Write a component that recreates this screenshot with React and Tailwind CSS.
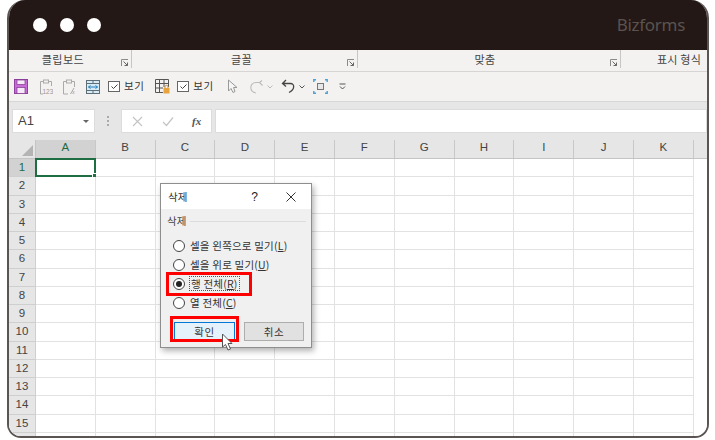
const columns = ['A', 'B', 'C', 'D', 'E', 'F', 'G', 'H', 'I', 'J', 'K'];
const rows = Array.from({ length: 16 }, (_, i) => i + 1);

function Launcher({ className = '' }) {
  return (
    <svg width="8" height="8" viewBox="0 0 8 8" fill="none" className={className}>
      <path d="M0.5 7V0.5H7" stroke="#8a8a8a" />
      <path d="M2.5 2.5L6.5 6.5M6.5 3.5V6.5H3.5" stroke="#666" />
    </svg>
  );
}

function RibbonGroup({ label, className }) {
  return (
    <div className={`relative flex justify-center items-center h-[18px] border-r border-[#c8c6c4] ${className}`}>
      <span className="text-[11px] text-[#444] tracking-[0.5px]">{label}</span>
      <Launcher className="absolute right-[2px] bottom-[1px]" />
    </div>
  );
}

function CheckView() {
  return (
    <div className="flex items-center gap-[4px]">
      <span className="flex items-center justify-center w-[12px] h-[11px] border border-[#666] bg-white">
        <svg width="9" height="9" viewBox="0 0 9 9" fill="none">
          <path d="M1.5 4.5L3.5 6.5L7.5 2.5" stroke="#444" strokeWidth="1" />
        </svg>
      </span>
      <span className="text-[10.5px] text-[#333] leading-none tracking-[0.5px]">보기</span>
    </div>
  );
}

function Toolbar() {
  return (
    <div className="flex items-center h-[30px] bg-[#f3f2f1] border-t border-[#d6d5d4] pl-[5px] shrink-0">
      <svg width="14" height="15" viewBox="0 0 14 15" fill="none">
        <rect x="0.5" y="0.5" width="13" height="14" fill="#c86ad8" stroke="#8f3fa0" />
        <rect x="3" y="1" width="8" height="4.5" fill="#f6e8f8" stroke="#7c3a88" strokeWidth="0.7" />
        <rect x="3" y="8.5" width="8" height="6" fill="#f6e8f8" stroke="#7c3a88" strokeWidth="0.7" />
      </svg>
      <svg width="13" height="16" viewBox="0 0 13 16" fill="none" className="ml-[12px]">
        <path d="M3 2.5H0.5V15H3M9 2.5H11.5V7" stroke="#aaa" />
        <rect x="3.5" y="1" width="5" height="3" stroke="#aaa" />
        <text x="2.5" y="15" fontSize="6.5" fill="#999" fontFamily="Liberation Sans">123</text>
      </svg>
      <svg width="14" height="16" viewBox="0 0 14 16" fill="none" className="ml-[10px]">
        <path d="M3 2.5H0.5V15H5M9 2.5H11.5V8" stroke="#aaa" />
        <rect x="3.5" y="1" width="5" height="3" stroke="#aaa" />
        <path d="M11 9L7.5 15" stroke="#aaa" />
        <text x="9" y="15" fontSize="6" fontStyle="italic" fill="#999" fontFamily="Liberation Serif">x</text>
      </svg>
      <svg width="14" height="14" viewBox="0 0 14 14" fill="none" className="ml-[9px]">
        <rect x="0.5" y="0.5" width="13" height="13" fill="#d6ebf5" stroke="#5f6f76" />
        <path d="M0.5 3.5H13.5M0.5 10.5H13.5M7 0.5V3.5M7 10.5V13.5" stroke="#5f6f76" />
        <path d="M2.5 7H11.5M2.5 7L4.5 5.5M2.5 7L4.5 8.5M11.5 7L9.5 5.5M11.5 7L9.5 8.5" stroke="#1f7fc0" />
      </svg>
      <div className="ml-[8px]"><CheckView /></div>
      <svg width="15" height="15" viewBox="0 0 15 15" fill="none" className="ml-[11px]">
        <path d="M0.5 0.5H13.5V8M0.5 0.5V13.5H8M0.5 4.5H13.5M4.5 0.5V13.5M9 0.5V8M0.5 9H8" stroke="#555" />
        <rect x="8.5" y="9" width="6" height="5.5" fill="#e8a33d" />
        <path d="M10 9V7.5C10 6 13 6 13 7.5V9" stroke="#c98a2a" />
      </svg>
      <div className="ml-[7px]"><CheckView /></div>
      <svg width="12" height="15" viewBox="0 0 12 15" fill="none" className="ml-[13px]">
        <path d="M1.5 1V12L4 9.5L6 13.5L8 12.5L6.5 8.5H10Z" fill="#f5f5f5" stroke="#999" />
      </svg>
      <svg width="14" height="14" viewBox="0 0 14 14" fill="none" className="ml-[11px]">
        <path d="M9.5 2.5H6C2.5 2.5 0.8 5 0.8 7.5C0.8 10.5 3.5 12.5 6 13M12.5 5.5L9.5 2.5L12 0.5" stroke="#bbb" strokeWidth="1.1" />
      </svg>
      <svg width="6" height="4" viewBox="0 0 6 4" fill="none" className="ml-[3px]">
        <path d="M0.5 0.5L3 3L5.5 0.5" stroke="#bbb" />
      </svg>
      <svg width="15" height="15" viewBox="0 0 15 15" fill="none" className="ml-[8px]">
        <path d="M5 1L1.5 4.5L5 7.5M1.5 4.5H9.5C13.5 4.5 14.5 10 8 13.5" stroke="#444" strokeWidth="1.3" />
      </svg>
      <svg width="6" height="4" viewBox="0 0 6 4" fill="none" className="ml-[3px]">
        <path d="M0.5 0.5L3 3L5.5 0.5" stroke="#555" />
      </svg>
      <svg width="15" height="15" viewBox="0 0 15 15" fill="none" className="ml-[8px]">
        <rect x="4.5" y="4.5" width="6" height="6" fill="#e8e8e8" stroke="#777" />
        <path d="M0.8 3V0.8H3M12 0.8H14.2V3M0.8 12V14.2H3M14.2 12V14.2H12" stroke="#4a9fd6" strokeWidth="1.4" />
      </svg>
      <svg width="7" height="7" viewBox="0 0 7 7" fill="none" className="ml-[11px]">
        <path d="M0.5 1H6.5M1 3.5L3.5 6L6 3.5" stroke="#555" />
      </svg>
    </div>
  );
}

function FormulaBar() {
  return (
    <div className="flex items-stretch h-[39px] bg-[#e6e6e6] pt-[7px] pb-[7px] shrink-0 border-t border-[#d6d6d6]">
      <div className="flex items-center justify-between w-[83px] ml-[3px] bg-white border border-[#dcdcdc] pl-[5px] pr-[5px]">
        <span className="text-[13px] text-[#444] font-['Liberation_Sans',sans-serif]">A1</span>
        <span className="w-0 h-0 border-x-[3px] border-x-transparent border-t-[3px] border-t-[#666]" />
      </div>
      <div className="flex flex-col justify-center gap-[2px] w-[26px] items-center">
        <span className="w-[2px] h-[2px] bg-[#aaa]" />
        <span className="w-[2px] h-[2px] bg-[#aaa]" />
        <span className="w-[2px] h-[2px] bg-[#aaa]" />
      </div>
      <div className="flex items-center w-[91px] bg-white border border-[#dcdcdc]">
        <svg width="11" height="11" viewBox="0 0 11 11" fill="none" className="ml-[10px]">
          <path d="M1 1L10 10M10 1L1 10" stroke="#c4c4c4" strokeWidth="1.2" />
        </svg>
        <svg width="12" height="11" viewBox="0 0 12 11" fill="none" className="ml-[19px]">
          <path d="M1 6L4.5 9.5L11 1.5" stroke="#c4c4c4" strokeWidth="1.2" />
        </svg>
        <span className="ml-[18px] text-[11px] italic font-bold text-[#555] font-['Liberation_Serif',serif]">fx</span>
      </div>
      <div className="flex-1 ml-[3px] bg-white border border-[#dcdcdc]" />
    </div>
  );
}

function Sheet() {
  return (
    <div className="flex-1 min-h-0 overflow-hidden bg-white font-['Liberation_Sans',sans-serif]">
      <div className="flex h-[19px] bg-[#e6e6e6] border-b border-[#c4c4c4]">
        <div className="relative w-[27px] shrink-0 border-r border-[#c4c4c4]">
          <span className="absolute right-[2px] bottom-[2px] w-0 h-0 border-l-[11px] border-l-transparent border-b-[11px] border-b-[#b4b4b4]" />
        </div>
        {columns.map((c, i) => (
          <div
            key={c}
            className={`flex items-center justify-center w-[59.8px] shrink-0 pb-[2px] text-[11.5px] border-r border-[#c8c8c8] ${i === 0 ? 'bg-[#d2d2d2] text-[#1f6b45]' : 'text-[#444]'}`}
          >
            {c}
          </div>
        ))}
      </div>
      {rows.map(r => (
        <div key={r} className="flex h-[18.25px]">
          <div className={`flex items-center justify-center w-[27px] shrink-0 text-[11.5px] border-r border-b border-[#cfcfcf] ${r === 1 ? 'bg-[#d2d2d2] text-[#1f6b45]' : 'bg-[#e6e6e6] text-[#444]'}`}>
            {r < 16 ? r : ''}
          </div>
          {columns.map((c, i) => (
            <div key={c} className="relative w-[59.8px] shrink-0 border-r border-b border-[#e2e2e2]">
              {r === 1 && i === 0 && (
                <span className="absolute -left-[1px] -top-[1px] right-[-1px] bottom-[-1px] border-2 border-[#1f6e43]">
                  <span className="absolute -right-[3px] -bottom-[3px] w-[5px] h-[5px] bg-[#1f6e43] border border-white" />
                </span>
              )}
            </div>
          ))}
        </div>
      ))}
    </div>
  );
}

function Radio({ label, hotkey, checked, focused }) {
  return (
    <div className="flex items-center h-[19px]">
      <span className="flex items-center justify-center w-[12px] h-[12px] rounded-full border border-[#444] bg-white shrink-0">
        {checked && <span className="w-[6px] h-[6px] rounded-full bg-[#222]" />}
      </span>
      <span className={`ml-[4px] px-[1px] text-[10.5px] text-[#333] tracking-[0.2px] whitespace-nowrap ${focused ? 'border border-dotted border-[#555] leading-[13px]' : ''}`}>
        {label}(<span className="underline">{hotkey}</span>)
      </span>
    </div>
  );
}

function DeleteDialog() {
  return (
    <div className="absolute left-[151px] top-[183px] w-[152px] h-[165px] flex flex-col bg-[#f0f0f0] border border-[#8e8e8e] shadow-[2px_3px_6px_rgba(0,0,0,0.3)]">
      <div className="flex items-center h-[25px] bg-white pl-[7px] shrink-0">
        <span className="text-[10.5px] text-[#333]">삭제</span>
        <span className="ml-[64px] text-[12px] text-[#222] font-['Liberation_Sans',sans-serif]">?</span>
        <svg width="10" height="10" viewBox="0 0 10 10" fill="none" className="ml-[28px]">
          <path d="M0.5 0.5L9.5 9.5M9.5 0.5L0.5 9.5" stroke="#333" />
        </svg>
      </div>
      <div className="flex items-center gap-[4px] pl-[6px] pr-[5px] mt-[5px] h-[14px]">
        <span className="text-[10.5px] text-[#444]">삭제</span>
        <span className="flex-1 h-px bg-[#dcdcdc]" />
      </div>
      <div className="flex flex-col pl-[12px] mt-[8px]">
        <Radio label="셀을 왼쪽으로 밀기" hotkey="L" />
        <Radio label="셀을 위로 밀기" hotkey="U" />
        <Radio label="행 전체" hotkey="R" checked focused />
        <Radio label="열 전체" hotkey="C" />
      </div>
      <div className="flex gap-[9px] pl-[13px] mt-[10px]">
        <div className="flex items-center justify-center w-[61px] h-[19px] bg-[#e5f1fb] border border-[#0078d7] text-[10.5px] text-[#333] tracking-[0.5px]">확인</div>
        <div className="flex items-center justify-center w-[60px] h-[19px] bg-[#e1e1e1] border border-[#adadad] text-[10.5px] text-[#333] tracking-[0.5px]">취소</div>
      </div>
    </div>
  );
}

export default function App() {
  return (
    <div className="w-[715px] h-[440px] bg-white font-['Noto_Sans_CJK_KR','Noto_Sans',sans-serif] overflow-hidden">
      <div className="relative flex flex-col w-[702px] h-[438px] ml-[7px] rounded-t-[18px] rounded-b-[14px] border-x-2 border-b-2 border-[#5a5452] overflow-hidden bg-white">
        <div className="flex items-center justify-between h-[50px] -mx-[2px] pl-[26px] pr-[24px] bg-[#231815] shrink-0">
          <div className="flex gap-[13px]">
            <span className="w-[14px] h-[14px] rounded-full bg-white" />
            <span className="w-[14px] h-[14px] rounded-full bg-white" />
            <span className="w-[14px] h-[14px] rounded-full bg-white" />
          </div>
          <span className="text-[17px] text-[#5a5350] font-['Noto_Sans',sans-serif] tracking-[-0.3px]">Bizforms</span>
        </div>
        <div className="flex h-[21px] bg-[#f3f2f1] shrink-0">
          <RibbonGroup label="클립보드" className="w-[123px] pr-[14px]" />
          <RibbonGroup label="글꼴" className="w-[226px] pr-[6px]" />
          <RibbonGroup label="맞춤" className="w-[263px] pr-[8px]" />
          <div className="flex-1 flex justify-end items-center h-[18px] pr-[6px]">
            <span className="text-[11px] text-[#444] tracking-[0.2px] whitespace-nowrap">표시 형식</span>
          </div>
        </div>
        <Toolbar />
        <FormulaBar />
        <Sheet />
        <DeleteDialog />
        <div className="absolute left-[157px] top-[272px] w-[86px] h-[24px] border-[3px] border-[#ff0000]" />
        <div className="absolute left-[161px] top-[316px] w-[69px] h-[26px] border-[3px] border-[#ff0000]" />
        <svg width="14" height="19" viewBox="0 0 14 19" fill="none" className="absolute left-[212px] top-[333px]">
          <path d="M1.5 1V14L4.5 11.5L7 17L9.5 16L7 10.5H11Z" fill="#fff" stroke="#555" />
        </svg>
      </div>
    </div>
  );
}
